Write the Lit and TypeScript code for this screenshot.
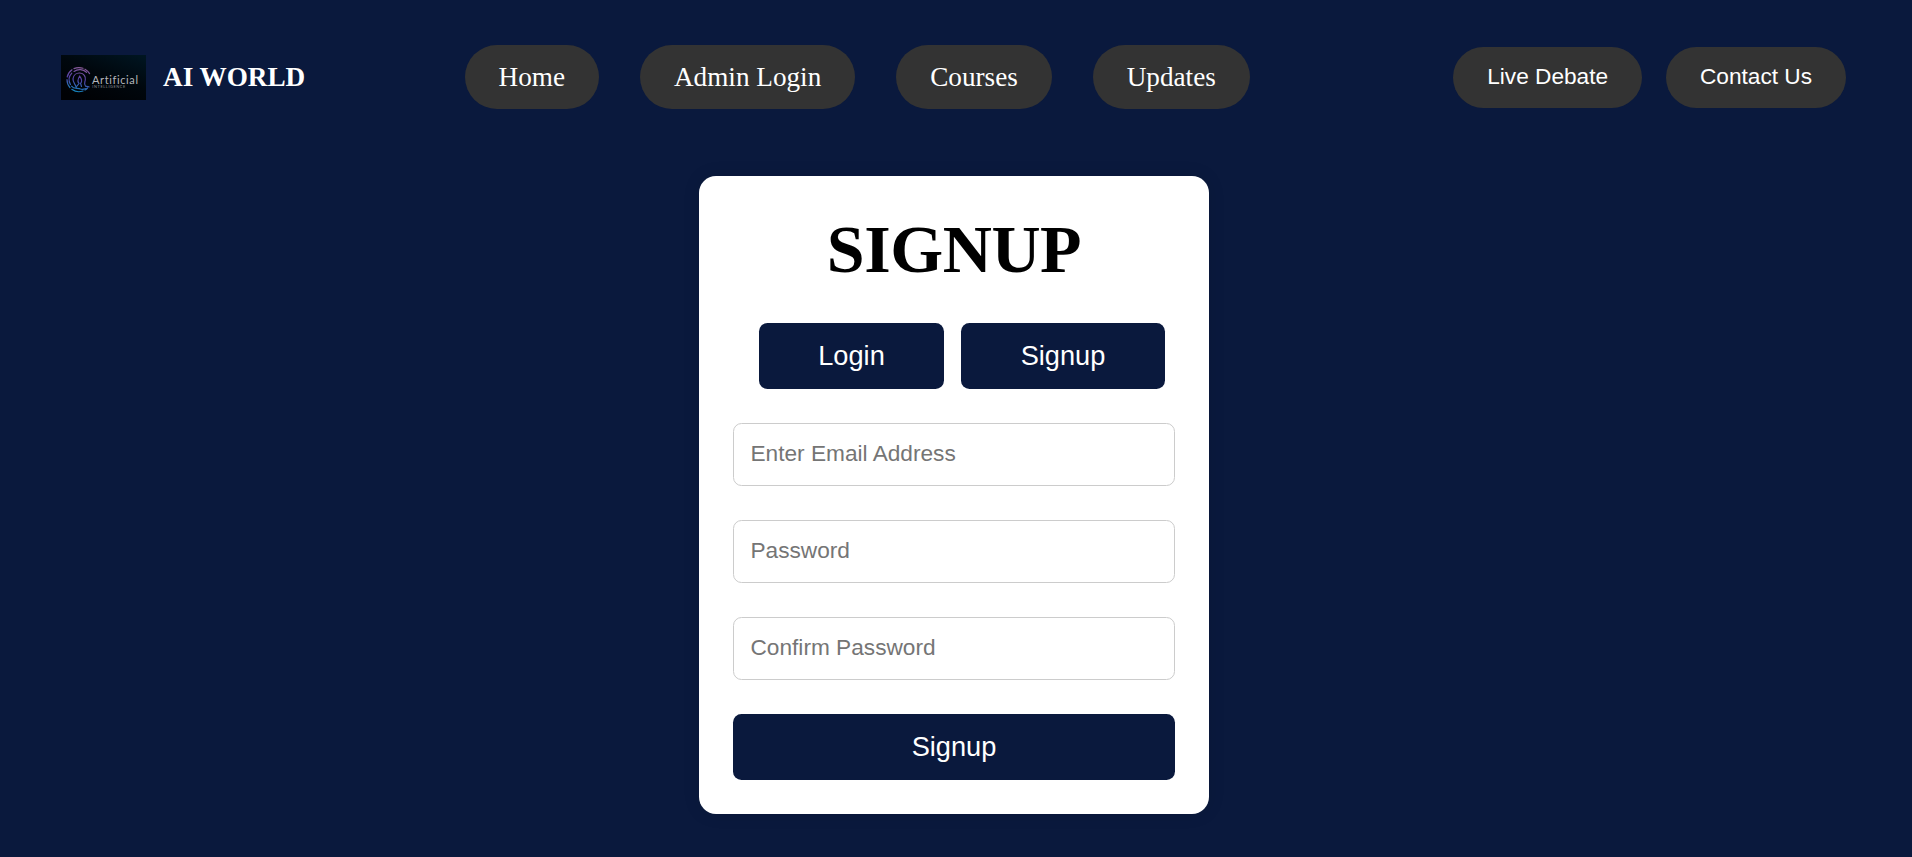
import { LitElement, html, css } from "lit";
import { customElement } from "lit/decorators.js";

@customElement("ai-logo")
class AiLogo extends LitElement {
  static styles = css`
    :host { display: block; width: 85px; height: 45px; }
    svg { display: block; }
    .word { font: 400 11px Lato, "Open Sans", sans-serif; font-variant-ligatures: none; fill: #b4b6bb; }
    .sub { font: 3.9px Lato, "Open Sans", sans-serif; fill: #8b8d93; }
  `;
  render() {
    return html`<svg width="85" height="45" viewBox="0 0 85 45">
      <defs>
        <linearGradient id="bg" x1="0.95" y1="0" x2="0.25" y2="1">
          <stop offset="0" stop-color="#001521" />
          <stop offset="0.5" stop-color="#00070d" />
          <stop offset="1" stop-color="#000104" />
        </linearGradient>
        <linearGradient id="ink" gradientUnits="userSpaceOnUse" x1="21" y1="12" x2="15" y2="37">
          <stop offset="0" stop-color="#8d5c98" />
          <stop offset="0.5" stop-color="#5340a6" />
          <stop offset="1" stop-color="#1286bd" />
        </linearGradient>
      </defs>
      <rect width="85" height="45" fill="url(#bg)" />
      <g fill="none" stroke="url(#ink)" stroke-width="1.2" stroke-linecap="round">
        <path d="M28.6 18.6A12 12 0 0 0 24 14.2M22 13.3A12 12 0 0 0 13 13.6M11 14.8A12 12 0 0 0 6.2 22M6 24.5A12 12 0 0 0 9 32.6M10.8 34.3A12 12 0 0 0 22 36M24 35A12 12 0 0 0 26.5 33" />
        <path d="M25.5 17.3A9.8 9.8 0 0 0 13 16.4M10.8 18.2A9.8 9.8 0 0 0 9.4 29.5" />
        <path d="M15.2 32.5C15 29.5 11.6 28 12 23.8C12.5 20 15.5 17.8 18.8 18C22.8 18.3 25 21.5 24.3 25C23.8 27.8 22.6 29 24.5 31.2L28 31.8" />
        <path d="M15.6 31.5L18 28.5C15.8 26 17.2 23.5 18.6 21.2C20.4 23.5 21.8 26 19.6 28.5L20.5 31.5" />
        <path d="M10.5 31.2C13 34.8 17 32.3 19.5 34C21.5 34.8 23.5 34 25 33.6" />
      </g>
      <text class="word" x="31" y="28.7" textLength="46">Artificial</text>
      <text class="sub" x="31.3" y="32.6" textLength="33">INTELLIGENCE</text>
    </svg>`;
  }
}

@customElement("app-root")
class AppRoot extends LitElement {
  static styles = css`
    :host {
      display: block;
      min-height: 857px;
      box-sizing: border-box;
      background: #0a193d;
      font-family: "Liberation Serif", "Times New Roman", serif;
      overflow: hidden;
    }
    header {
      display: flex;
      align-items: center;
      height: 64px;
      padding: 45px 66px 0 61px;
    }
    .brand { display: flex; align-items: center; gap: 17px; width: 403.6px; }
    .name { font-size: 27.2px; line-height: 30px; font-weight: bold; color: #fff; }
    nav { display: flex; gap: 40.95px; flex: 1; }
    nav a {
      padding: 17px 34px;
      border-radius: 34px;
      background: #333;
      color: #fff;
      font-size: 27.2px;
      line-height: 30px;
      text-decoration: none;
    }
    .actions { display: flex; gap: 23.8px; }
    button, input { font-family: "Liberation Sans", Arial, sans-serif; box-sizing: border-box; margin: 0; }
    button { border: 0; color: #fff; }
    .actions button {
      height: 61px;
      padding: 0 34px 1px;
      border-radius: 34px;
      background: #333;
      font-size: 22.667px;
    }
    main {
      box-sizing: border-box;
      width: 510px;
      height: 638px;
      margin: 67px 0 0 699px;
      padding: 34px;
      border-radius: 17px;
      background: #fff;
      box-shadow: 0 0 17px rgba(0, 0, 0, 0.1);
    }
    h1 { margin: 0; font-size: 68px; line-height: 78px; letter-spacing: -0.4px; text-align: center; color: #000; }
    .tabs { display: flex; gap: 17px; padding: 35px 0 34px 26px; }
    .solid {
      height: 66px;
      padding: 0 59.5px;
      border-radius: 8.5px;
      background: #0a193d;
      font-size: 27.2px;
    }
    .tabs .solid { padding: 0; width: 204px; }
    .tabs .solid:first-child { width: 185px; }
    form { display: flex; flex-direction: column; gap: 34px; }
    input {
      width: 100%;
      height: 63px;
      padding: 0 17px 2px 16.5px;
      border: 1px solid #ccc;
      border-radius: 8.5px;
      font-size: 22.667px;
    }
    input::placeholder { color: #757575; }
  `;
  render() {
    return html`
      <header>
        <div class="brand"><ai-logo></ai-logo><span class="name">AI WORLD</span></div>
        <nav>${["Home", "Admin Login", "Courses", "Updates"].map((t) => html`<a href="#">${t}</a>`)}</nav>
        <div class="actions"><button>Live Debate</button><button>Contact Us</button></div>
      </header>
      <main>
        <h1>SIGNUP</h1>
        <div class="tabs"><button class="solid">Login</button><button class="solid">Signup</button></div>
        <form>
          <input type="email" placeholder="Enter Email Address" />
          <input type="password" placeholder="Password" />
          <input type="password" placeholder="Confirm Password" />
          <button type="button" class="solid">Signup</button>
        </form>
      </main>
    `;
  }
}
